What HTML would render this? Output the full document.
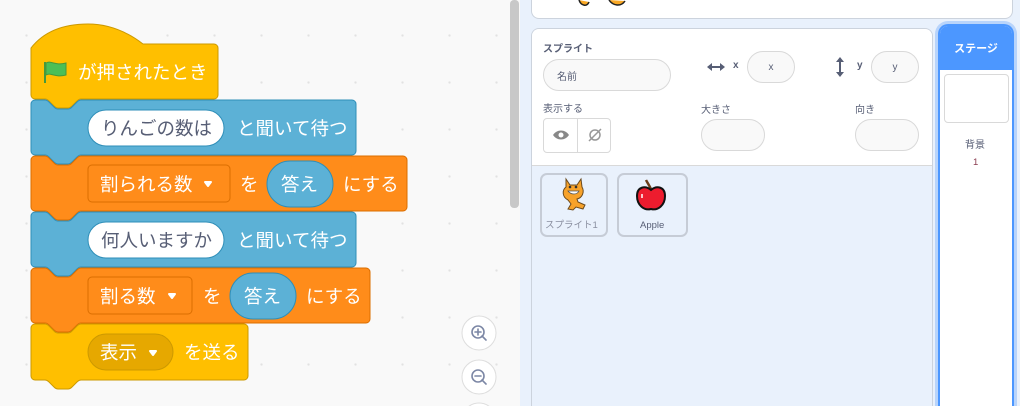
<!DOCTYPE html>
<html style="width:1020px;height:406px;overflow:hidden"><head><meta charset="utf-8"><style>
body{margin:0;width:1020px;height:406px;overflow:hidden;background:#e9f1fc;font-family:"Liberation Sans","Noto Sans CJK JP",sans-serif;position:relative}
.abs{position:absolute}
.code{left:0;top:0;width:520px;height:406px;background:#f9f9f9;background-image:radial-gradient(circle,#e2e2e2 1px,transparent 1.3px);background-size:47px 47px;background-position:3px 12px}
.inp{position:absolute;background:#f9f9f9;border:1px solid #d9d9d9;border-radius:16px;font-size:10px;color:#575e75;display:flex;align-items:center;justify-content:center}
.lbl{position:absolute;font-size:10px;color:#575e75}
</style></head><body>
<div class="abs code"></div>
<div class="abs" style="left:510px;top:0;width:9px;height:208px;background:#c8c8c8;border-radius:4px"></div>
<svg class="abs" style="left:0;top:0" width="520" height="406" font-family="Liberation Sans, Noto Sans CJK JP, sans-serif">
<g stroke-width="1">
<path d="M31,48 C45,30 65,24 88,24 C112,24 130,34 143,44 H214 a4,4 0 0 1 4,4 V95 a4,4 0 0 1 -4,4 H81 c-2,0 -3,1 -4,2 l-5,5 c-1,1 -2,2 -4,2 h-10 c-2,0 -3,-1 -4,-2 l-5,-5 c-1,-1 -2,-2 -4,-2 H35 a4,4 0 0 1 -4,-4 Z" fill="#ffbf00" stroke="#cc9900"/>
<path d="M31,104 a4,4 0 0 1 4,-4 H45 c2,0 3,1 4,2 l5,5 c1,1 2,2 4,2 h10 c2,0 3,-1 4,-2 l5,-5 c1,-1 2,-2 4,-2 H352 a4,4 0 0 1 4,4 V151 a4,4 0 0 1 -4,4 H81 c-2,0 -3,1 -4,2 l-5,5 c-1,1 -2,2 -4,2 h-10 c-2,0 -3,-1 -4,-2 l-5,-5 c-1,-1 -2,-2 -4,-2 H35 a4,4 0 0 1 -4,-4 Z" fill="#5cb1d6" stroke="#2e8eb8"/>
<path d="M31,160 a4,4 0 0 1 4,-4 H45 c2,0 3,1 4,2 l5,5 c1,1 2,2 4,2 h10 c2,0 3,-1 4,-2 l5,-5 c1,-1 2,-2 4,-2 H403 a4,4 0 0 1 4,4 V207 a4,4 0 0 1 -4,4 H81 c-2,0 -3,1 -4,2 l-5,5 c-1,1 -2,2 -4,2 h-10 c-2,0 -3,-1 -4,-2 l-5,-5 c-1,-1 -2,-2 -4,-2 H35 a4,4 0 0 1 -4,-4 Z" fill="#ff8c1a" stroke="#db6e00"/>
<path d="M31,216 a4,4 0 0 1 4,-4 H45 c2,0 3,1 4,2 l5,5 c1,1 2,2 4,2 h10 c2,0 3,-1 4,-2 l5,-5 c1,-1 2,-2 4,-2 H352 a4,4 0 0 1 4,4 V263 a4,4 0 0 1 -4,4 H81 c-2,0 -3,1 -4,2 l-5,5 c-1,1 -2,2 -4,2 h-10 c-2,0 -3,-1 -4,-2 l-5,-5 c-1,-1 -2,-2 -4,-2 H35 a4,4 0 0 1 -4,-4 Z" fill="#5cb1d6" stroke="#2e8eb8"/>
<path d="M31,272 a4,4 0 0 1 4,-4 H45 c2,0 3,1 4,2 l5,5 c1,1 2,2 4,2 h10 c2,0 3,-1 4,-2 l5,-5 c1,-1 2,-2 4,-2 H366 a4,4 0 0 1 4,4 V319 a4,4 0 0 1 -4,4 H81 c-2,0 -3,1 -4,2 l-5,5 c-1,1 -2,2 -4,2 h-10 c-2,0 -3,-1 -4,-2 l-5,-5 c-1,-1 -2,-2 -4,-2 H35 a4,4 0 0 1 -4,-4 Z" fill="#ff8c1a" stroke="#db6e00"/>
<path d="M31,328 a4,4 0 0 1 4,-4 H45 c2,0 3,1 4,2 l5,5 c1,1 2,2 4,2 h10 c2,0 3,-1 4,-2 l5,-5 c1,-1 2,-2 4,-2 H244 a4,4 0 0 1 4,4 V376 a4,4 0 0 1 -4,4 H81 c-2,0 -3,1 -4,2 l-5,5 c-1,1 -2,2 -4,2 h-10 c-2,0 -3,-1 -4,-2 l-5,-5 c-1,-1 -2,-2 -4,-2 H35 a4,4 0 0 1 -4,-4 Z" fill="#ffbf00" stroke="#cc9900"/>
</g>
<path d="M45,62 V83" stroke="#45993d" stroke-width="2"/>
<path d="M46,63 C51,60 55,66 66,63 V75 C55,78 51,72 46,75 Z" fill="#4cbf56" stroke="#45993d" stroke-width="1"/>
<g fill="#fff" font-size="18.5">
<text x="78" y="79">が押されたとき</text>
<rect x="88" y="110" width="136" height="36" rx="18" fill="#fff" stroke="#2e8eb8"/>
<text x="101" y="135" fill="#575e75">りんごの数は</text>
<text x="237" y="135">と聞いて待つ</text>
<rect x="88" y="165" width="142" height="37" rx="4" fill="#ff8c1a" stroke="#db6e00"/>
<text x="100" y="191">割られる数</text>
<path d="M205,182 l6,0 l-3,4 z" stroke="#fff" stroke-width="2" stroke-linejoin="round"/>
<text x="240" y="191">を</text>
<rect x="267" y="161" width="66" height="46" rx="23" fill="#5cb1d6" stroke="#2e8eb8"/>
<text x="281" y="191">答え</text>
<text x="343" y="191">にする</text>
<rect x="88" y="222" width="136" height="36" rx="18" fill="#fff" stroke="#2e8eb8"/>
<text x="101" y="247" fill="#575e75">何人いますか</text>
<text x="237" y="247">と聞いて待つ</text>
<rect x="88" y="277" width="104" height="37" rx="4" fill="#ff8c1a" stroke="#db6e00"/>
<text x="100" y="303">割る数</text>
<path d="M169,294 l6,0 l-3,4 z" stroke="#fff" stroke-width="2" stroke-linejoin="round"/>
<text x="203" y="303">を</text>
<rect x="230" y="273" width="66" height="46" rx="23" fill="#5cb1d6" stroke="#2e8eb8"/>
<text x="244" y="303">答え</text>
<text x="306" y="303">にする</text>
<rect x="88" y="334" width="85" height="36" rx="18" fill="#e6a800" stroke="#cc9900"/>
<text x="100" y="359">表示</text>
<path d="M150,351 l6,0 l-3,4 z" stroke="#fff" stroke-width="2" stroke-linejoin="round"/>
<text x="184" y="359">を送る</text>
</g>
<g fill="#fff" stroke="#ddd">
<circle cx="479" cy="333" r="17"/><circle cx="479" cy="377" r="17"/><circle cx="479" cy="420" r="17"/>
</g>
<g stroke="#7c87a5" stroke-width="1.6" fill="none" stroke-linecap="round">
<circle cx="478" cy="332" r="6"/><path d="M482,336 l4,4 M475,332 h6 M478,329 v6"/>
<circle cx="478" cy="376" r="6"/><path d="M482,380 l4,4 M475,376 h6"/>
</g>
</svg>
<div class="abs" style="left:531px;top:0;width:480px;height:18px;background:#fff;border:1px solid #ccd3dd;border-top:none;border-radius:0 0 8px 8px"></div>
<svg class="abs" style="left:575px;top:0" width="75" height="8"><path d="M4,0 c2,6 8,7 10,2 M34,0 c4,6 12,7 16,1" stroke="#222" stroke-width="1.5" fill="#f9a825"/></svg>
<div class="abs" style="left:531px;top:28px;width:400px;height:378px;background:#e9f1fc;border:1px solid #ccd3dd;border-bottom:none;border-radius:8px 8px 0 0;overflow:hidden">
<div style="height:136px;background:#fff;border-bottom:1px solid #d9d9d9"></div>
</div>
<div class="lbl" style="left:543px;top:40px;font-weight:bold">スプライト</div>
<div class="inp" style="left:543px;top:59px;width:126px;height:30px;justify-content:flex-start"><span style="margin-left:13px">名前</span></div>
<svg class="abs" style="left:706px;top:60px" width="20" height="14"><path d="M3,7 H17" stroke="#575e75" stroke-width="2"/><path d="M1,7 L6,3 V11 Z M19,7 L14,3 V11 Z" fill="#575e75"/></svg>
<div class="lbl" style="left:733px;top:60px;font-weight:bold">x</div>
<div class="inp" style="left:747px;top:51px;width:46px;height:30px">x</div>
<svg class="abs" style="left:833px;top:56px" width="14" height="22"><path d="M7,4 V18" stroke="#575e75" stroke-width="2"/><path d="M7,1 L3,6 H11 Z M7,21 L3,16 H11 Z" fill="#575e75"/></svg>
<div class="lbl" style="left:857px;top:60px;font-weight:bold">y</div>
<div class="inp" style="left:871px;top:51px;width:46px;height:30px">y</div>
<div class="lbl" style="left:543px;top:100px">表示する</div>
<div class="abs" style="left:543px;top:118px;width:66px;height:33px;border:1px solid #d9d9d9;border-radius:4px;background:#fff"></div>
<div class="abs" style="left:577px;top:119px;width:1px;height:33px;background:#d9d9d9"></div>
<svg class="abs" style="left:551px;top:127px" width="55" height="16"><path d="M2,8 C6,2 14,2 18,8 C14,14 6,14 2,8Z" fill="#888"/><circle cx="10" cy="8" r="2.5" fill="#fff"/><circle cx="44" cy="8" r="5" stroke="#999" stroke-width="1.5" fill="none"/><path d="M38,14 L50,2" stroke="#999" stroke-width="1.5"/></svg>
<div class="lbl" style="left:701px;top:101px">大きさ</div>
<div class="inp" style="left:701px;top:119px;width:62px;height:30px"></div>
<div class="lbl" style="left:855px;top:101px">向き</div>
<div class="inp" style="left:855px;top:119px;width:62px;height:30px"></div>
<div class="abs" style="left:540px;top:173px;width:68px;height:64px;border:2px solid #c6ccd6;border-radius:7px;box-sizing:border-box"></div>
<div class="lbl" style="left:545px;top:217px;font-size:9.5px;color:#8a8fa0">スプライト1</div>
<svg class="abs" style="left:560px;top:176px" width="30" height="36"><path d="M6,3 l4,6 h7 l4,-6 l1,8 c3,5 0,11 -5,12 l1,3 l7,3 l-2,4 l-7,-2 l-3,3 l-5,-1 l3,-5 l-3,-4 c-6,-3 -6,-10 -2,-13 Z" fill="#f7a22a" stroke="#6b4a1e" stroke-width="1"/><path d="M8,15 c3,4 9,4 11,0 Z" stroke="#555" fill="#fff" stroke-width="0.8"/><circle cx="10" cy="11" r="1.3" fill="#333"/><circle cx="16" cy="11" r="1.3" fill="#333"/></svg>
<div class="abs" style="left:617px;top:173px;width:71px;height:64px;border:2px solid #c6ccd6;border-radius:7px;box-sizing:border-box"></div>
<div class="lbl" style="left:640px;top:220px;font-size:9.5px">Apple</div>
<svg class="abs" style="left:635px;top:179px" width="32" height="34"><path d="M16,10 C14,6 12,3 11,1" stroke="#6b3d1a" stroke-width="2.5" fill="none"/><path d="M16,11 C10,6 2,8 2,17 C2,26 9,32 16,30 C23,32 30,26 30,17 C30,8 22,6 16,11Z" fill="#ed1c2e" stroke="#111" stroke-width="2"/><path d="M7,15 v4" stroke="#fff" stroke-width="1.5"/></svg>
<div class="abs" style="left:938px;top:24px;width:76px;height:382px;border:2px solid #4c97ff;border-bottom:none;box-shadow:0 0 0 3px #b8d4fb;border-radius:10px 10px 0 0;background:#fff;overflow:hidden;box-sizing:border-box">
<div style="height:44px;background:#4c97ff;color:#fff;font-weight:bold;font-size:11px;display:flex;align-items:center;justify-content:center">ステージ</div>
</div>
<div class="abs" style="left:944px;top:74px;width:63px;height:47px;border:1px solid #d9d9d9;border-radius:4px;background:#fff"></div>
<div class="lbl" style="left:965px;top:136px;font-size:10px">背景</div>
<div class="lbl" style="left:973px;top:157px;font-size:9.5px;color:#8a3b4f">1</div>
</body></html>
